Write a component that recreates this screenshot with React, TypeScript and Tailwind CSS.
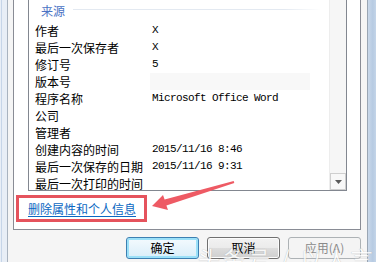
import React from "react";

const rows: [string, string][] = [
  ["作者", "X"],
  ["最后一次保存者", "X"],
  ["修订号", "5"],
  ["版本号", ""],
  ["程序名称", "Microsoft Office Word"],
  ["公司", ""],
  ["管理者", ""],
  ["创建内容的时间", "2015/11/16 8:46"],
  ["最后一次保存的日期", "2015/11/16 9:31"],
  ["最后一次打印的时间", ""],
];

export default function App() {
  return (
    <div className="relative flex h-[262px] w-[376px] overflow-hidden bg-[#f5f5f5] font-['Noto_Sans_CJK_SC','Liberation_Sans',sans-serif] text-[12px] text-black">
      {/* left window frame */}
      <div className="flex h-full w-[8px] shrink-0 bg-[#e8eef6]">
        <div className="ml-[1px] h-full w-px bg-[#c6d5e8]" />
        <div className="flex-1" />
        <div className="h-full w-px bg-[#a9b3bf]" />
      </div>

      {/* dialog body */}
      <div className="flex w-[359px] shrink-0 flex-col">
        {/* tab page */}
        <div className="ml-[5px] flex h-[230px] w-[348px] flex-col border-x border-b border-[#898c95] bg-white">
          {/* list view */}
          <div className="ml-[14px] flex h-[191px] w-[319px] overflow-hidden border-x border-b border-[#828790] bg-white">
            <div className="flex w-[300px] flex-col">
              <div className="flex h-[22px] shrink-0 items-center pl-[12px]">
                <span className="leading-none text-[#4a72c4]">来源</span>
                <div className="ml-[8px] mr-[8px] mt-[-3px] h-px flex-1 bg-[linear-gradient(90deg,#e3e9f1,#e3e9f1_85%,#ffffff)]" />
              </div>
              {rows.map(([k, v], i) => (
                <div key={k} className="flex h-[17px] shrink-0 items-center">
                  <div className="w-[121px] shrink-0 whitespace-nowrap pl-[6px] leading-none">{k}</div>
                  <div
                    className={
                      i === 3
                        ? "flex h-full w-[160px] items-center bg-[#f8f8f8] pl-[2px]"
                        : "flex h-full w-[160px] items-center pl-[2px]"
                    }
                  >
                    <span className="whitespace-pre font-['Liberation_Mono',monospace] text-[11px] leading-none tracking-[-0.6px]">{v}</span>
                  </div>
                </div>
              ))}
            </div>
            {/* scrollbar */}
            <div className="flex w-[17px] shrink-0 flex-col justify-end border-l border-[#ededed] bg-[#f6f6f6]">
              <div className="flex h-[17px] items-center justify-center border border-[#cfcfcf] bg-[#f8f8f8]">
                <svg width="7" height="4" viewBox="0 0 7 4">
                  <path d="M0 0h7L3.5 4z" fill="#5a5a5a" />
                </svg>
              </div>
            </div>
          </div>

          {/* link with red annotation box */}
          <div className="ml-[2px] mt-[4px] flex h-[27px] w-[131px] items-center border-[3px] border-[#e5535d] pl-[9px]">
            <span className="whitespace-nowrap text-[#0a67c2] underline underline-offset-2">删除属性和个人信息</span>
          </div>
        </div>

        {/* buttons */}
        <div className="mt-[7px] flex justify-end gap-[8px] pr-[6px]">
          <button className="flex h-[22px] w-[73px] items-center justify-center rounded-[3px] border border-[#3c7fb1] bg-[linear-gradient(#f4fafe,#d9eef9)] shadow-[inset_0_0_0_2px_#9be0f8]">
            确定
          </button>
          <button className="flex h-[22px] w-[73px] items-center justify-center rounded-[3px] border border-[#707070] bg-[linear-gradient(#f2f2f2_0%,#ebebeb_50%,#dddddd_50%,#cfcfcf_100%)] shadow-[inset_0_0_0_1px_#fcfcfc]">
            取消
          </button>
          <button className="flex h-[22px] w-[73px] items-center justify-center rounded-[3px] border border-[#adb2b5] bg-[#f4f4f4] text-[#8a8a8a]">
            应用(A)
          </button>
        </div>
      </div>

      {/* right window frame */}
      <div className="flex h-full w-[9px] shrink-0">
        <div className="h-full w-px bg-[#9aa6b4]" />
        <div className="h-full flex-1 bg-[linear-gradient(90deg,#c9d8ea,#b7cbe2_60%,#c4d5e9)]" />
      </div>

      {/* red arrow annotation */}
      <svg className="absolute left-[145px] top-[176px]" width="95" height="40" viewBox="0 0 95 40">
        <polygon
          points="7,30 23,34 21.4,29.4 89.3,6.9 88.7,5.1 19.6,23.4 18,19"
          fill="#ee5a64"
        />
      </svg>

      {/* watermark */}
      <div className="absolute left-[198px] top-[246px] whitespace-nowrap text-[22px] leading-none tracking-[3px] text-white opacity-80 [text-shadow:0_0_1px_#999]">
        头条号 / 以人言
      </div>
    </div>
  );
}
